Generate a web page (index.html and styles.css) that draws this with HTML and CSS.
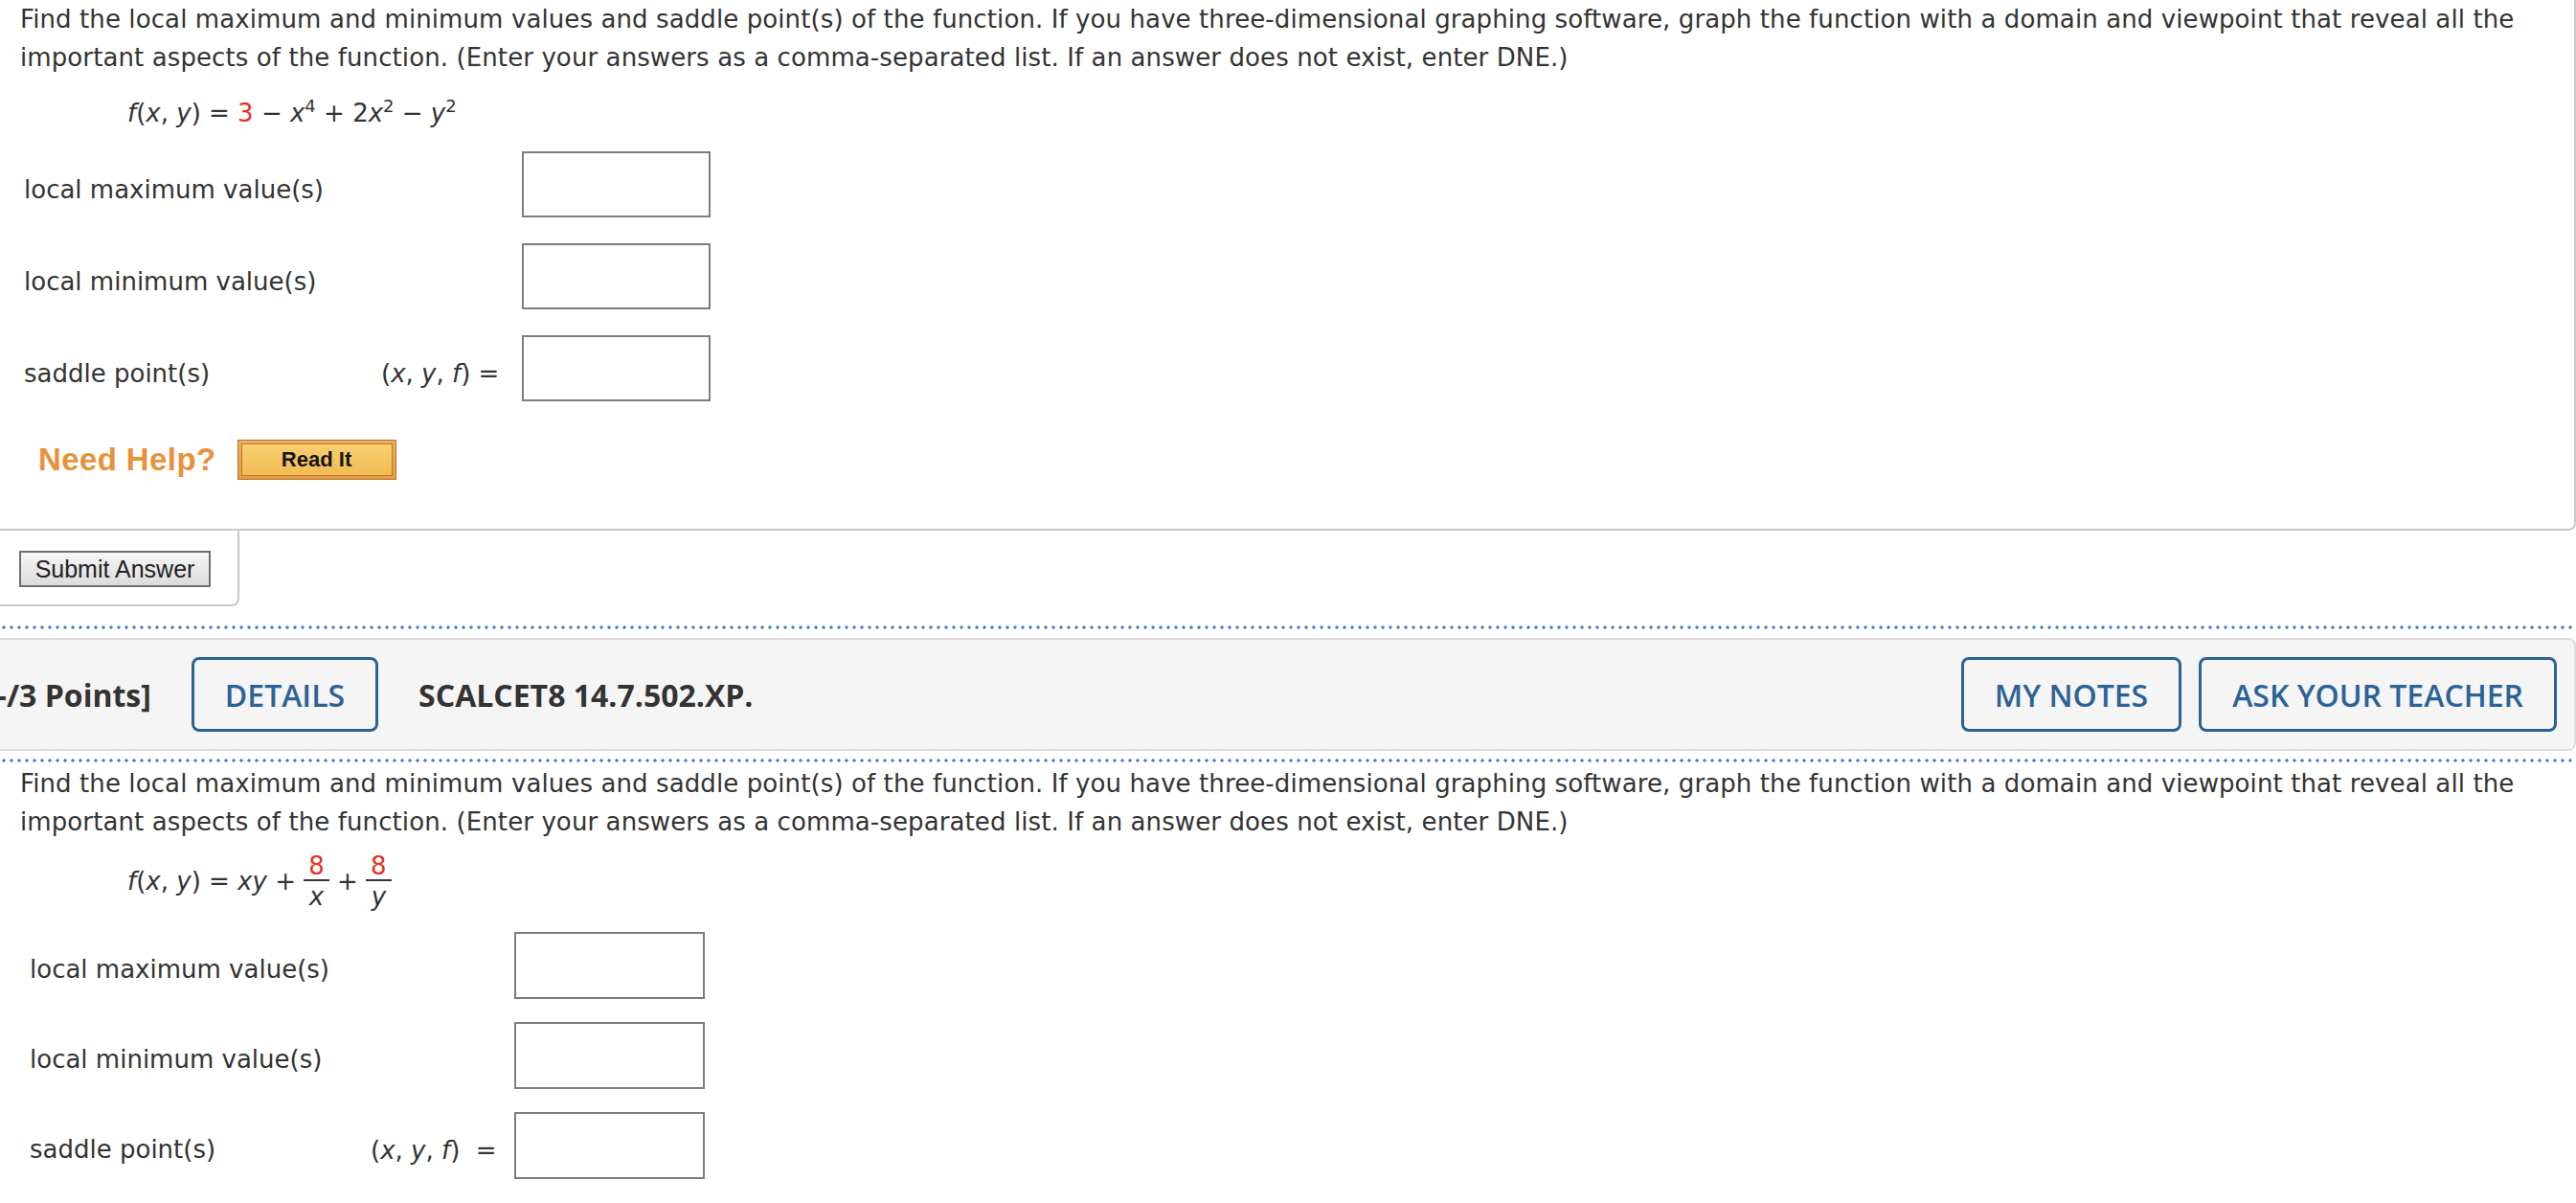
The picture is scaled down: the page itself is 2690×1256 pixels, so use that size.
FILE: index.html
```html
<!DOCTYPE html>
<html lang="en">
<head>
    <meta charset="UTF-8">
    <meta name="viewport" content="width=device-width, initial-scale=1.0">
    <title>SCALCET8 14.7</title>
    <link rel="stylesheet" href="styles.css">
</head>
<body>
    <div class="question">
        <p class="prompt">Find the local maximum and minimum values and saddle point(s) of the function. If you have three-dimensional graphing software, graph the function with a domain and viewpoint that reveal all the important aspects of the function. (Enter your answers as a comma-separated list. If an answer does not exist, enter DNE.)</p>
        <div class="formula">
            <i>f</i>(<i>x</i>, <i>y</i>) = <span class="given">3</span> &minus; <i>x</i><sup>4</sup> + 2<i>x</i><sup>2</sup> &minus; <i>y</i><sup>2</sup>
        </div>
        <div class="answers">
            <div class="answer-row">
                <span class="label">local maximum value(s)</span>
                <span class="prefix"></span>
                <input class="answer-box" type="text">
            </div>
            <div class="answer-row">
                <span class="label">local minimum value(s)</span>
                <span class="prefix"></span>
                <input class="answer-box" type="text">
            </div>
            <div class="answer-row">
                <span class="label">saddle point(s)</span>
                <span class="prefix">(<i>x</i>, <i>y</i>, <i>f</i>) =</span>
                <input class="answer-box" type="text">
            </div>
        </div>
        <div class="help">
            <span class="need-help">Need Help?</span>
            <button class="read-it"><span>Read It</span></button>
        </div>
    </div>
    <div class="submit-tab">
        <button class="submit">Submit Answer</button>
    </div>

    <div class="dots"></div>
    <div class="question-header">
        <span class="points">[-/3 Points]</span>
        <button class="outline-btn details">DETAILS</button>
        <span class="question-id">SCALCET8 14.7.502.XP.</span>
        <div class="header-actions">
            <button class="outline-btn">MY NOTES</button>
            <button class="outline-btn">ASK YOUR TEACHER</button>
        </div>
    </div>
    <div class="dots dots-below"></div>

    <div class="question question-open">
        <p class="prompt">Find the local maximum and minimum values and saddle point(s) of the function. If you have three-dimensional graphing software, graph the function with a domain and viewpoint that reveal all the important aspects of the function. (Enter your answers as a comma-separated list. If an answer does not exist, enter DNE.)</p>
        <div class="formula formula-frac">
            <i>f</i>(<i>x</i>, <i>y</i>) = <i>xy</i> +
            <span class="frac"><span class="num given">8</span><span class="den"><i>x</i></span></span> +
            <span class="frac"><span class="num given">8</span><span class="den"><i>y</i></span></span>
        </div>
        <div class="answers">
            <div class="answer-row">
                <span class="label">local maximum value(s)</span>
                <span class="prefix"></span>
                <input class="answer-box" type="text">
            </div>
            <div class="answer-row">
                <span class="label">local minimum value(s)</span>
                <span class="prefix"></span>
                <input class="answer-box" type="text">
            </div>
            <div class="answer-row">
                <span class="label">saddle point(s)</span>
                <span class="prefix">(<i>x</i>, <i>y</i>, <i>f</i>)&nbsp; =</span>
                <input class="answer-box" type="text">
            </div>
        </div>
    </div>
</body>
</html>
```

FILE: styles.css
```css
body {
    margin: 0;
    font-family: "DejaVu Sans", Verdana, sans-serif;
    font-size: 26px;
    color: #333;
    background-color: #fff;
    overflow: hidden;
}

.question {
    border-right: 2px solid #c9c9c9;
    border-bottom: 2px solid #c9c9c9;
    border-bottom-right-radius: 8px;
    padding: 0 40px 51px 0;
}

.prompt {
    margin: 0;
    padding-left: 21px;
    line-height: 40px;
    letter-spacing: 0.1px;
}

.formula {
    margin-top: 19px;
    padding-left: 133px;
    line-height: 39px;
}

.formula sup {
    font-size: 18px;
    line-height: 0;
    vertical-align: 10px;
}

.given {
    color: #e5321f;
}

.answers {
    margin-top: 20px;
    padding-left: 25px;
    display: flex;
    flex-direction: column;
    gap: 27px;
}

.answer-row {
    display: flex;
    align-items: center;
}

.label {
    width: 373px;
    padding-top: 10px;
}

.prefix {
    width: 130px;
    padding-top: 10px;
    white-space: nowrap;
}

.answer-box {
    margin: 0 0 0 17px;
    width: 197px;
    height: 69px;
    box-sizing: border-box;
    border: 2px solid #7d7d7d;
    padding: 0;
    background: #fff;
}

.help {
    display: flex;
    align-items: center;
    gap: 22px;
    margin-top: 40px;
    padding-left: 40px;
}

.need-help {
    font-family: "Liberation Sans", Arial, sans-serif;
    font-weight: bold;
    font-size: 33px;
    letter-spacing: 0.4px;
    color: #e8913b;
}

.read-it {
    width: 166px;
    height: 42px;
    padding: 3px;
    border: 1px solid #b9762d;
    background: linear-gradient(#eeac5c, #e59a44);
    cursor: pointer;
}

.read-it span {
    display: block;
    height: 100%;
    box-sizing: border-box;
    border: 1px solid #b9782f;
    background: linear-gradient(#f8cf72, #f1bb52);
    font-family: "Liberation Sans", Arial, sans-serif;
    font-weight: bold;
    font-size: 22px;
    line-height: 32px;
    color: #141414;
}

.submit-tab {
    width: 250px;
    box-sizing: border-box;
    border-right: 2px solid #c9c9c9;
    border-bottom: 2px solid #c9c9c9;
    border-bottom-right-radius: 8px;
    padding: 21px 0 18px 20px;
}

.submit {
    display: block;
    width: 200px;
    height: 38px;
    padding: 0;
    border: 2px solid #6f6f6f;
    background: linear-gradient(#f6f6f6, #dcdcdc);
    font-family: "Liberation Sans", Arial, sans-serif;
    font-size: 25px;
    color: #222;
}

.dots {
    height: 4px;
    margin-top: 20px;
    background: radial-gradient(circle, #3e80dd 1.4px, transparent 1.9px) 0 0 / 8px 4px repeat-x;
}

.dots-below {
    margin-top: 8px;
}

.question-header {
    display: flex;
    align-items: center;
    margin-top: 9px;
    padding: 18px 18px 18px 0;
    background-color: #f5f5f5;
    border: 2px solid #dcdcdc;
    border-left: 0;
    border-radius: 0 8px 8px 0;
    font-family: "Open Sans", sans-serif;
    font-size: 32px;
    color: #333;
}

.points {
    margin-left: -14px;
    margin-right: 42px;
    font-weight: bold;
    white-space: nowrap;
}

.question-id {
    margin-left: 42px;
    font-weight: bold;
}

.outline-btn {
    height: 78px;
    padding: 0 32px;
    border: 3px solid #2c6397;
    border-radius: 8px;
    background: transparent;
    font-family: "Open Sans", sans-serif;
    font-size: 32px;
    font-weight: 600;
    color: #2c6397;
    white-space: nowrap;
}

.header-actions {
    display: flex;
    gap: 18px;
    margin-left: auto;
}

.question-open {
    border: 0;
    padding-bottom: 0;
}

.question-open .prompt {
    margin-top: 2px;
}

.formula-frac {
    margin-top: 12px;
}

.frac {
    display: inline-flex;
    flex-direction: column;
    align-items: center;
    vertical-align: middle;
}

.num {
    line-height: 28px;
    padding: 0 5px;
    border-bottom: 2px solid #333;
}

.den {
    line-height: 32px;
}

.question-open .answers {
    margin-top: 21px;
    padding-left: 31px;
    gap: 24px;
}

.question-open .label {
    width: 356px;
    padding-top: 8px;
}

.question-open .prefix {
    width: 133px;
}

.question-open .answer-box {
    width: 199px;
    height: 70px;
}
```
